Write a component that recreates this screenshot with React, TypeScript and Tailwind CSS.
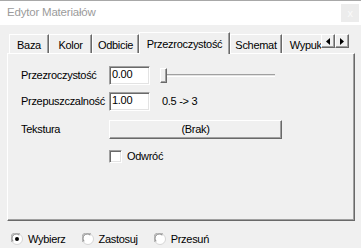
import React from "react";

const FONT = { fontFamily: '"Liberation Sans", Arial, sans-serif' };

function Tab({ label, w, active }: { label: string; w: number; active?: boolean }) {
  if (active) {
    return (
      <div
        style={{ width: w }}
        className="relative z-10 -mb-px h-[22px] shrink-0 border-l border-t border-white border-r border-r-[#696969] bg-[#f0f0f0] pt-[3px] text-center shadow-[inset_-1px_0_0_#a0a0a0]"
      >
        {label}
      </div>
    );
  }
  return (
    <div
      style={{ width: w }}
      className="h-[19px] shrink-0 border-l border-t border-white border-r border-r-[#696969] pt-[2px] text-center whitespace-nowrap shadow-[inset_-1px_0_0_#a0a0a0]"
    >
      {label}
    </div>
  );
}

function ArrowBtn({ dir }: { dir: "left" | "right" }) {
  return (
    <div className="flex h-[14px] w-[14px] items-center justify-center border-l border-t border-white border-r border-b border-r-[#696969] border-b-[#696969] bg-[#f0f0f0] shadow-[inset_-1px_-1px_0_#a0a0a0]">
      <svg width="4" height="7" viewBox="0 0 4 7">
        {dir === "left" ? <path d="M4 0 L0 3.5 L4 7 Z" fill="#000" /> : <path d="M0 0 L4 3.5 L0 7 Z" fill="#000" />}
      </svg>
    </div>
  );
}

function Field({ value }: { value: string }) {
  return (
    <div className="h-[19px] w-[41px] shrink-0 border-l border-t border-[#a0a0a0] border-r border-b border-r-white border-b-white bg-white pl-[2px] leading-[15px] shadow-[inset_1px_1px_0_#696969,inset_-1px_-1px_0_#e3e3e3]">
      {value}
    </div>
  );
}

function Radio({ checked, label }: { checked?: boolean; label: string }) {
  return (
    <div className="flex items-center gap-[5px]">
      <svg width="12" height="12" viewBox="0 0 12 12">
        <circle cx="6" cy="6" r="5.5" fill="#fff" stroke="#d4d4d4" />
        <path d="M1.2 9 A5 5 0 0 1 9 1.2" fill="none" stroke="#a0a0a0" strokeWidth="1" />
        <path d="M2.2 8.2 A4 4 0 0 1 8.2 2.2" fill="none" stroke="#808080" strokeWidth="1" />
        {checked && <circle cx="6" cy="6" r="2" fill="#000" />}
      </svg>
      <span>{label}</span>
    </div>
  );
}

export default function App() {
  return (
    <div style={FONT} className="flex h-[248px] w-[361px] flex-col overflow-hidden bg-[#f0f0f0] text-[11px] tracking-[-0.3px] text-black">
      {/* title bar */}
      <div className="flex h-[25px] shrink-0 items-center justify-between border-t border-[#a8a8a8] bg-white pl-[7px] pr-[2px]">
        <span className="text-[11.5px] tracking-[-0.2px] text-[#9b9b9b]">Edytor Materiałów</span>
        <div className="flex h-[18px] w-[18px] items-center justify-center bg-[#ececec] text-[11px] text-[#fafafa]">x</div>
      </div>

      <div className="flex flex-col pl-[7px] pr-[6px] pt-[7px]">
        {/* tab strip */}
        <div className="flex h-[21px] items-end pl-[2px]">
          <Tab label="Baza" w={40} />
          <Tab label="Kolor" w={43} />
          <Tab label="Odbicie" w={47} />
          <Tab label="Przezroczystość" w={91} active />
          <Tab label="Schemat" w={52} />
          <div className="w-[39px] shrink-0 overflow-hidden">
            <Tab label="Wypukłość" w={66} />
          </div>
          <div className="flex self-start pt-[2px]">
            <ArrowBtn dir="left" />
            <ArrowBtn dir="right" />
          </div>
        </div>

        {/* panel */}
        <div className="flex h-[168px] flex-col border-l border-t border-white border-r border-b border-r-[#696969] border-b-[#696969] pl-[13px] pt-[12px] shadow-[inset_-1px_-1px_0_#a0a0a0]">
          <div className="flex h-[19px] items-center">
            <span className="w-[88px] shrink-0">Przezroczystość</span>
            <Field value="0.00" />
            <div className="relative ml-[10px] flex h-[15px] w-[115px] items-center">
              <div className="h-[3px] w-full border-t border-[#a0a0a0] border-b border-b-white bg-[#e3e3e3]" />
              <div className="absolute left-0 top-0 h-[15px] w-[7px] border-l border-t border-white border-r border-b border-r-[#696969] border-b-[#696969] bg-[#f0f0f0] shadow-[inset_-1px_-1px_0_#a0a0a0]" />
            </div>
          </div>

          <div className="mt-[7px] flex h-[19px] items-center">
            <span className="w-[88px] shrink-0">Przepuszczalność</span>
            <Field value="1.00" />
            <span className="ml-[12px]">0.5 -&gt; 3</span>
          </div>

          <div className="mt-[9px] flex h-[19px] items-center">
            <span className="w-[88px] shrink-0">Tekstura</span>
            <div className="flex h-[19px] w-[173px] items-center justify-center border-l border-t border-white border-r border-b border-r-[#696969] border-b-[#696969] shadow-[inset_-1px_-1px_0_#a0a0a0]">
              (Brak)
            </div>
          </div>

          <div className="mt-[9px] flex items-center gap-[5px] pl-[88px]">
            <div className="h-[13px] w-[13px] border-l border-t border-[#a0a0a0] border-r border-b border-r-white border-b-white bg-white shadow-[inset_1px_1px_0_#696969,inset_-1px_-1px_0_#e3e3e3]" />
            <span>Odwróć</span>
          </div>
        </div>
      </div>

      {/* mode radios */}
      <div className="mt-[11px] flex h-[14px] items-center gap-[16px] pl-[11px]">
        <Radio label="Wybierz" checked />
        <Radio label="Zastosuj" />
        <Radio label="Przesuń" />
      </div>
    </div>
  );
}
